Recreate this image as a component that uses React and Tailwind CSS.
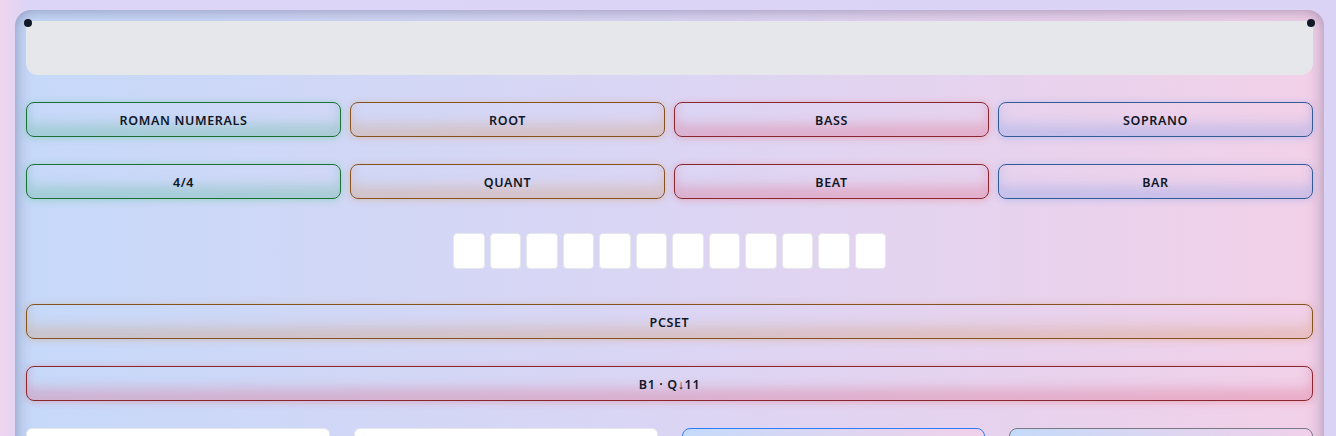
import React from 'react';

const font = { fontFamily: '"Noto Sans", "Open Sans", sans-serif' };

const topRow = [
  { label: 'ROMAN NUMERALS', tone: 'green' },
  { label: 'ROOT', tone: 'amber' },
  { label: 'BASS', tone: 'red' },
  { label: 'SOPRANO', tone: 'blue' },
];

const secondRow = [
  { label: '4/4', tone: 'green' },
  { label: 'QUANT', tone: 'amber' },
  { label: 'BEAT', tone: 'red' },
  { label: 'BAR', tone: 'blue' },
];

// full class strings per tone, so tailwind picks them up
const tones = {
  green:
    'border-[#1d6e37] shadow-[0_1px_7px_rgba(34,197,94,0.3),inset_0_-12px_12px_rgba(80,180,140,0.3)]',
  amber:
    'border-[#85531f] shadow-[0_1px_7px_rgba(217,119,6,0.25),inset_0_-12px_12px_rgba(210,150,100,0.3)]',
  red:
    'border-[#87272f] shadow-[0_1px_7px_rgba(239,68,68,0.3),inset_0_-12px_12px_rgba(220,110,140,0.35)]',
  blue:
    'border-[#345b93] shadow-[0_1px_7px_rgba(59,130,246,0.25),inset_0_-12px_12px_rgba(120,150,230,0.3)]',
};

function ToneButton({ label, tone, className = '' }) {
  return (
    <button
      className={`h-[35px] rounded-lg border pt-[3px] text-[12.5px] font-semibold tracking-wider text-gray-900 ${tones[tone]} ${className}`}
    >
      {label}
    </button>
  );
}

export default function App() {
  const slots = Array.from({ length: 12 });

  return (
    <div
      className="min-h-screen bg-gradient-to-r from-[#efd5ee] from-0% via-[#dcd5f7] via-[2%] to-[#dad3f6] pl-[15px] pr-[12px] pt-[10px]"
      style={font}
    >
      <div className="rounded-2xl bg-gradient-to-r from-[#c6d9f9] via-[#dbd5f4] to-[#f2d0e8] px-[11px] pt-[11px] pb-6 shadow-[inset_0_0_16px_rgba(60,55,100,0.45)]">
        <div className="flex flex-col gap-[27px]">
          <div className="relative h-[54px] rounded-b-xl bg-[#e5e7eb]">
            <span className="absolute -left-[2px] -top-[2px] h-2 w-2 rounded-full bg-[#111827]" />
            <span className="absolute -right-[2px] -top-[2px] h-2 w-2 rounded-full bg-[#111827]" />
          </div>

          <div className="grid grid-cols-4 gap-[9px]">
            {topRow.map(b => (
              <ToneButton key={b.label} {...b} />
            ))}
          </div>

          <div className="grid grid-cols-4 gap-[9px]">
            {secondRow.map(b => (
              <ToneButton key={b.label} {...b} />
            ))}
          </div>

          <div className="flex justify-center gap-[5px] pt-[7px] pb-[8px]">
            {slots.map((_, i) => (
              <div
                key={i}
                className="h-9 w-[31.5px] rounded-[4px] border border-[#e5e7eb] bg-white"
              />
            ))}
          </div>

          <ToneButton label="PCSET" tone="amber" className="w-full" />
          <ToneButton label="B1 · Q↓11" tone="red" className="w-full" />

          <div className="grid grid-cols-4 gap-6">
            <div className="h-10 rounded-md border border-[#e5e7eb] bg-white" />
            <div className="h-10 rounded-md border border-[#e5e7eb] bg-white" />
            <div className="h-10 rounded-lg border border-[#2f7df6] bg-gradient-to-r from-[#c4daf9] to-[#f1d0ea]" />
            <div className="h-10 rounded-lg border border-[#7a7a86] bg-gradient-to-r from-[#c4daf9] to-[#f1d0ea]" />
          </div>
        </div>
      </div>
    </div>
  );
}
